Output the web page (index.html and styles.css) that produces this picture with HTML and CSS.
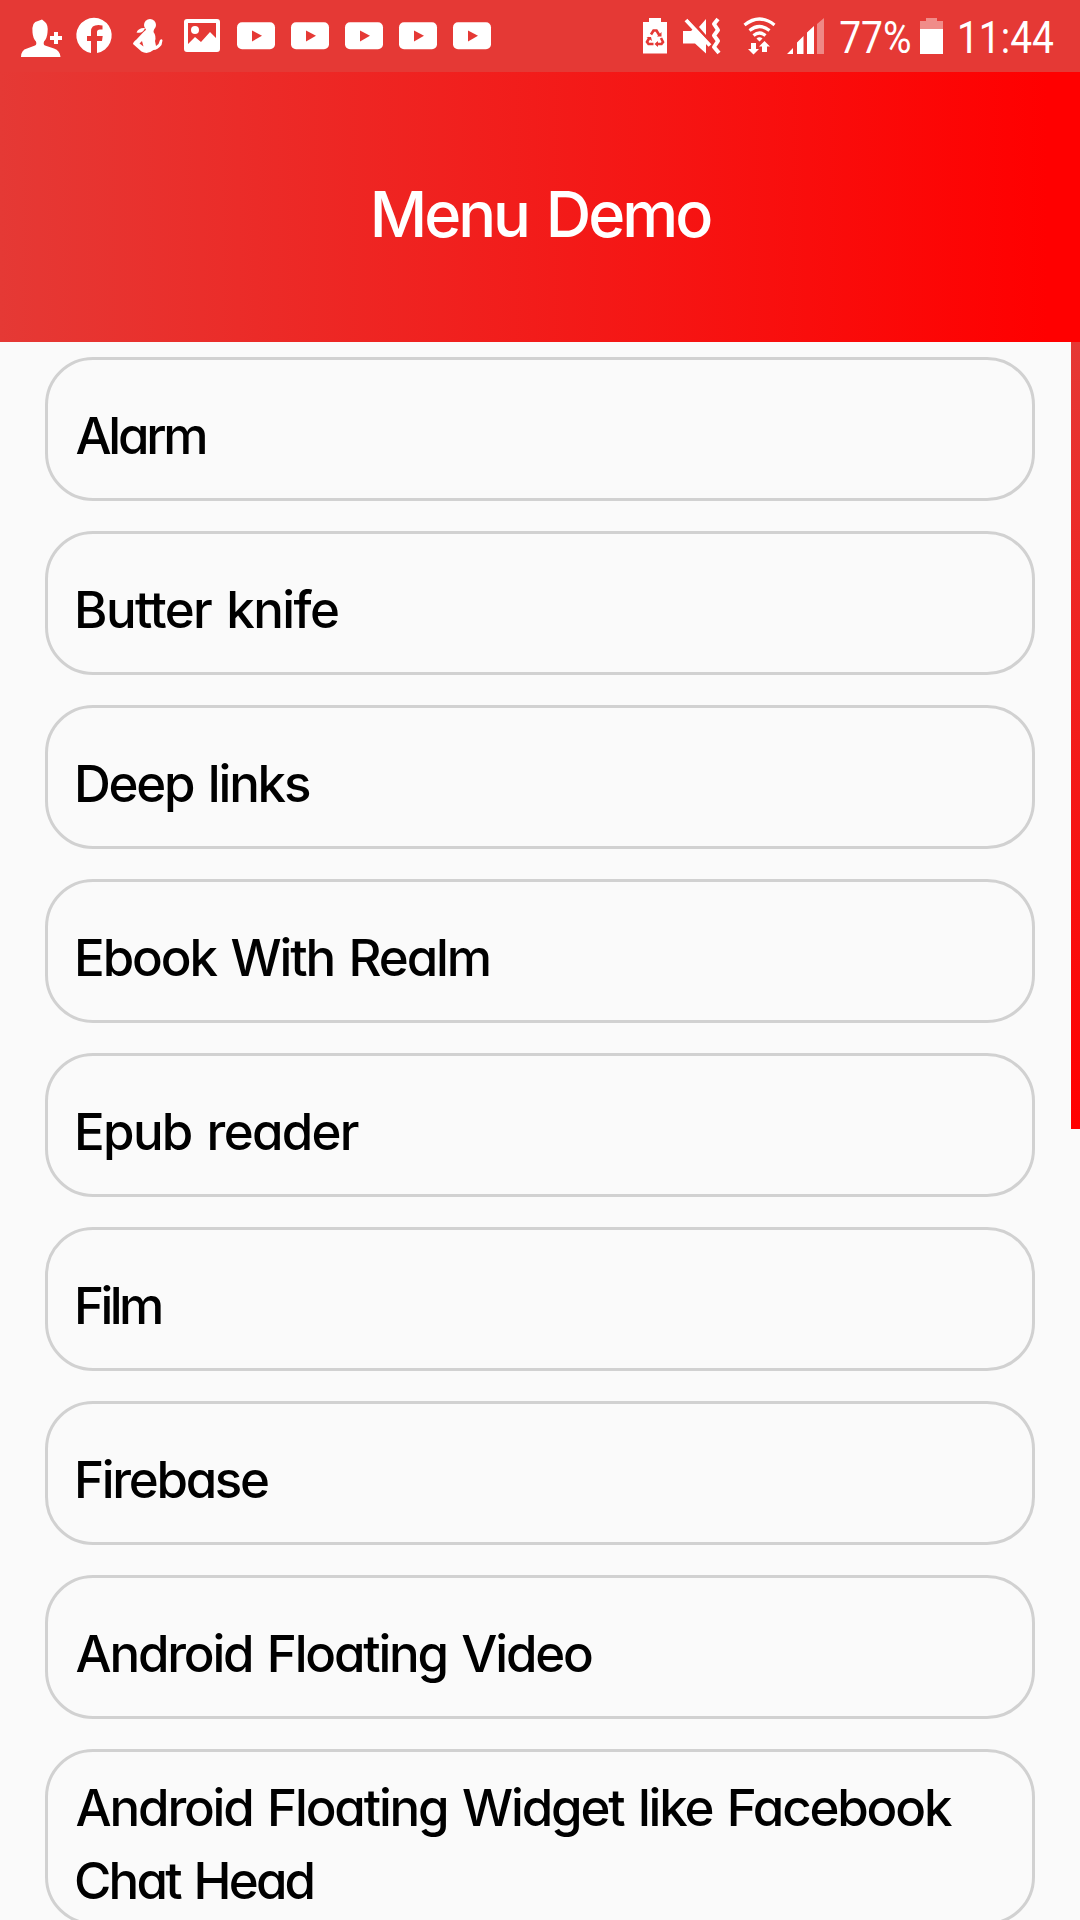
FILE: index.html
```
<!DOCTYPE html>
<html lang="en">
<head>
<meta charset="utf-8">
<title>Menu Demo</title>
<link rel="stylesheet" href="styles.css">
</head>
<body>
<div class="status">
  <svg class="icons" width="500" height="72" viewBox="0 0 500 72" fill="#fff">
    <path d="M21 57q0-7 6-8.500l8-3q2-1 1-4-3-3-3.500-9-1-11 5.500-11.500l4-1.500 3 2.500q3.500 3 2.500 10.500-.5 6-3.500 9-1 3 1 4l9 3q6 2 6.500 8.500zM54 32h4v4h4v4h-4v4h-4v-4h-4v-4h4z"/>
    <path d="M91 53A17.700 17.700 0 1 1 97 53V41h5l.7-5H97v-4q0-2.500 3-2.500h2.500V25.500Q91 23.500 91 31.500V36h-4v5h4z"/>
    <g>
      <circle cx="150" cy="25" r="6"/>
      <path d="M147 29h7l-.5 3q3 4 1.500 9l1 5 2.500-2 1.500-4q2-1.500 2.500.5l-1 4.500q-4 5-8 5-6 5-12 1.500l-8.500-7.500q0-2 3.500-4.500l7-7.500z"/>
      <path d="M136.500 32.500q2-5 8.500-4.500-2 6-8.500 4.500z"/>
      <path d="M139.500 43.500l2.500-2.500 1.500 5.500z" fill="#e53935"/>
    </g>
    <path fill-rule="evenodd" d="M187 19h30q3 0 3 3v27q0 3-3 3h-30q-3 0-3-3V22q0-3 3-3zM188 23v21l7-7 6 5 9-10 6 6V23z"/>
    <circle cx="195" cy="30" r="4"/>
    <g id="video">
      <rect x="237" y="22.300" width="38" height="27" rx="5"/>
      <path d="M252 30.500l10 5.300-10 5.600z" fill="#e53935"/>
    </g>
    <use href="#video" x="54"/>
    <use href="#video" x="108"/>
    <use href="#video" x="162"/>
    <use href="#video" x="216"/>
  </svg>
  <div class="right">
    <svg width="204" height="72" viewBox="630 0 204 72" fill="#fff">
      <path d="M649 18h12v4h6v31.500h-24V22h6z"/>
      <g fill="none" stroke="#e53935" stroke-width="2.600">
        <path d="M651 34.500l2.500-4h3l3 5M649.500 37.500l-2.500 4.500 1.500 2h5M661 38l2 4-1.500 2H656"/>
      </g>
      <path d="M657 36.500h4.500v-4.500zM646.500 37h4.500l1 4zM658 41v6l-3.500-3z" fill="#e53935"/>
      <path d="M683 31h8l3-3 12 15v10.500l-11-10h-12zM699 27l7-8v16z"/>
      <path d="M686 20l24 25.500" stroke="#fff" stroke-width="4"/>
      <path d="M688.500 18.500l24 25.500" stroke="#e53935" stroke-width="1.500"/>
      <path d="M718 19l-4 5 4 6-4 5.500 4 5.500-4 6 5 6" fill="none" stroke="#fff" stroke-width="4" stroke-linejoin="round"/>
      <g fill="none" stroke="#fff" stroke-width="3.200">
        <path d="M744.500 25q15-12 30 0M749.500 30.500q10-8 20 0M753.500 35.500q6-5 12 0"/>
      </g>
      <path d="M756.500 38.500q3-2.500 6 0l-3 3zM751 43h5v6h3l-5.500 5.500-5.500-5.500h3zM762 52v-5.500h-3l5.500-5.500 5.500 5.500h-3V52z"/>
      <path d="M787 54l6-6v6zM797 54V42.500l6.500-6.500v18zM807 54V32.500l7-6.500v28z"/>
      <path d="M817 54V24l7-6v36z" opacity=".4"/>
    </svg>
    <span class="percent">77%</span>
    <svg width="24" height="72" viewBox="920 0 24 72" fill="#fff">
      <path d="M926 18h11v3h6v8h-23v-8h6z" opacity=".42"/>
      <path d="M920 29h23v25h-23z"/>
    </svg>
    <span class="clock">11:44</span>
  </div>
</div>
<header class="header"><h1>Menu Demo</h1></header>
<main class="content">
  <ul class="menu">
    <li class="item alarm"><span>Alarm</span></li>
    <li class="item knife"><span>Butter knife</span></li>
    <li class="item links"><span>Deep links</span></li>
    <li class="item ebook"><span>Ebook With Realm</span></li>
    <li class="item epub"><span>Epub reader</span></li>
    <li class="item film"><span>Film</span></li>
    <li class="item firebase"><span>Firebase</span></li>
    <li class="item video"><span>Android Floating Video</span></li>
    <li class="item widget"><span>Android Floating Widget like Facebook</span><span class="second">Chat Head</span></li>
  </ul>
  <div class="scrollbar"></div>
</main>
</body>
</html>
```
FILE: styles.css
```
* { box-sizing: border-box; }
body {
  margin: 0;
  width: 1080px;
  height: 1920px;
  overflow: hidden;
  display: flex;
  flex-direction: column;
  background: #fafafa;
  color: #000;
  font-family: Inter, "Liberation Sans", sans-serif;
  font-feature-settings: "cv11";
}
.status {
  flex: none;
  height: 72px;
  display: flex;
  justify-content: space-between;
  background: #e53935;
  color: #fff;
}
.icons { flex: none; }
.right { width: 450px; display: flex; }
.right svg { flex: none; }
.percent, .clock {
  flex: none;
  font: 45px/75px Roboto, sans-serif;
  transform: scaleX(.865);
  transform-origin: 0 0;
}
.percent { width: 86px; padding-left: 6px; }
.clock { width: 136px; padding-left: 15px; }
.header {
  flex: none;
  height: 270px;
  padding-top: 102px;
  text-align: center;
  background: linear-gradient(90deg, #e53935, #f00 97%);
  color: #fff;
}
.header h1 {
  margin: 0;
  font-size: 63px;
  font-weight: 450;
  line-height: 80px;
  letter-spacing: -3px;
  word-spacing: 4px;
}
.content {
  flex: 1;
  min-height: 0;
  display: flex;
  justify-content: space-between;
}
.menu {
  flex: none;
  width: 1035px;
  margin: 0;
  padding: 15px 0 0 45px;
  list-style: none;
  display: flex;
  flex-direction: column;
  gap: 30px;
}
.item {
  flex: none;
  height: 144px;
  padding: 39px 0 0 26px;
  border: 3px solid #d1d1d1;
  border-radius: 48px;
  font-size: 51px;
  font-weight: 450;
  line-height: 73px;
  white-space: nowrap;
  word-spacing: 3px;
}
.item span { display: block; }
.alarm { padding-left: 27.5px; letter-spacing: -3.3px; }
.knife { letter-spacing: -1.57px; }
.links { letter-spacing: -2.2px; }
.ebook { letter-spacing: -2.1px; }
.epub { letter-spacing: -1.7px; }
.film { letter-spacing: -3.6px; }
.firebase { letter-spacing: -2.3px; }
.video { padding-left: 27.5px; letter-spacing: -2.2px; }
.widget { height: 176px; padding: 19px 0 0 27.5px; letter-spacing: -2.16px; }
.second { margin-left: -1.5px; letter-spacing: -2.8px; }
.scrollbar {
  flex: none;
  width: 9px;
  height: 787px;
  background: linear-gradient(#e53935, #f00);
}
```
